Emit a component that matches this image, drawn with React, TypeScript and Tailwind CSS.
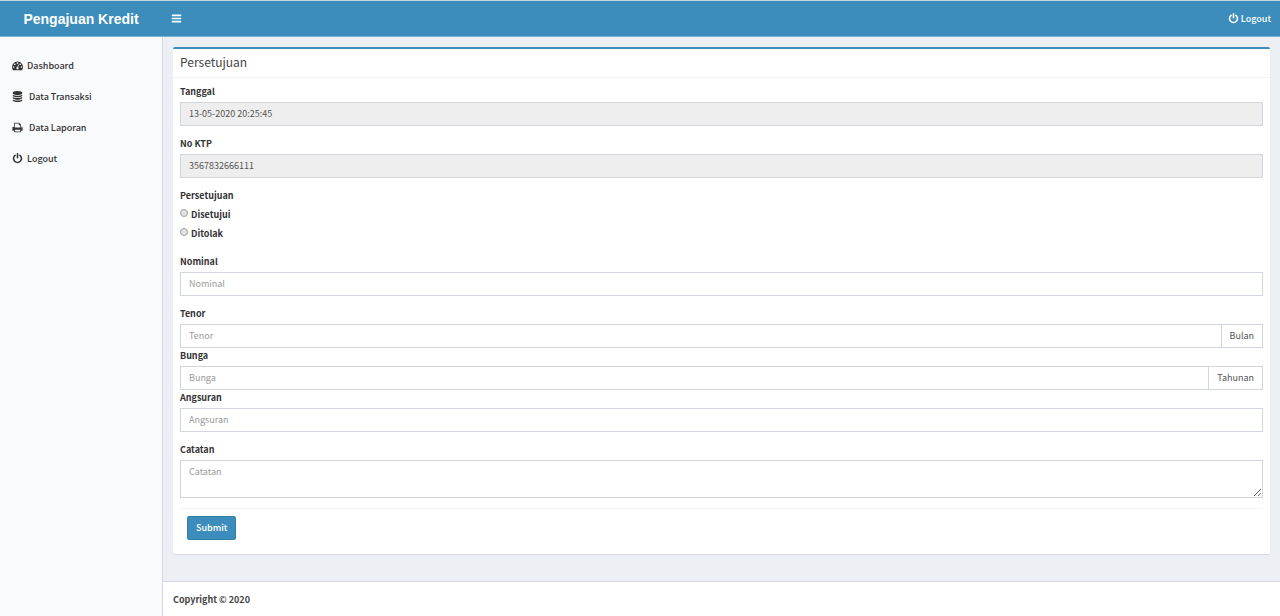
import cx from 'clsx';
import { FC, ReactNode } from 'react';

type IconProps = {
    className?: string;
    name: keyof typeof iconPaths;
};

const iconPaths = {
    bars: 'M1664 1344v128q0 26-19 45t-45 19h-1408q-26 0-45-19t-19-45v-128q0-26 19-45t45-19h1408q26 0 45 19t19 45zm0-512v128q0 26-19 45t-45 19h-1408q-26 0-45-19t-19-45v-128q0-26 19-45t45-19h1408q26 0 45 19t19 45zm0-512v128q0 26-19 45t-45 19h-1408q-26 0-45-19t-19-45v-128q0-26 19-45t45-19h1408q26 0 45 19t19 45z',
    dashboard:
        'M384 1152q0-53-37.5-90.5t-90.5-37.5-90.5 37.5-37.5 90.5 37.5 90.5 90.5 37.5 90.5-37.5 37.5-90.5zm192-448q0-53-37.5-90.5t-90.5-37.5-90.5 37.5-37.5 90.5 37.5 90.5 90.5 37.5 90.5-37.5 37.5-90.5zm428 481l101-382q6-26-7.5-48.5t-38.5-29.5-48 6.5-30 39.5l-101 382q-60 5-107 43.5t-63 98.5q-20 77 20 146t117 89 146-20 89-117q16-60-6-117t-72-91zm660-33q0-53-37.5-90.5t-90.5-37.5-90.5 37.5-37.5 90.5 37.5 90.5 90.5 37.5 90.5-37.5 37.5-90.5zm-640-640q0-53-37.5-90.5t-90.5-37.5-90.5 37.5-37.5 90.5 37.5 90.5 90.5 37.5 90.5-37.5 37.5-90.5zm448 192q0-53-37.5-90.5t-90.5-37.5-90.5 37.5-37.5 90.5 37.5 90.5 90.5 37.5 90.5-37.5 37.5-90.5zm320 448q0 261-141 483-19 29-54 29h-1402q-35 0-54-29-141-221-141-483 0-182 71-348t191-286 286-191 348-71 348 71 286 191 191 286 71 348z',
    database:
        'M896 768q237 0 443-43t325-127v170q0 69-103 128t-280 93.5-385 34.5-385-34.5-280-93.5-103-128v-170q119 84 325 127t443 43zm0 768q237 0 443-43t325-127v170q0 69-103 128t-280 93.5-385 34.5-385-34.5-280-93.5-103-128v-170q119 84 325 127t443 43zm0-384q237 0 443-43t325-127v170q0 69-103 128t-280 93.5-385 34.5-385-34.5-280-93.5-103-128v-170q119 84 325 127t443 43zm0-1152q208 0 385 34.5t280 93.5 103 128v128q0 69-103 128t-280 93.5-385 34.5-385-34.5-280-93.5-103-128v-128q0-69 103-128t280-93.5 385-34.5z',
    power: 'M1664 896q0 156-61 298t-164 245-245 164-298 61-298-61-245-164-164-245-61-298q0-182 80.5-343t226.5-270q43-32 95.5-25t83.5 50q32 42 24.5 94.5t-49.5 84.5q-98 74-151.5 181t-53.5 228q0 104 40.5 198.5t109.5 163.5 163.5 109.5 198.5 40.5 198.5-40.5 163.5-109.5 109.5-163.5 40.5-198.5q0-121-53.5-228t-151.5-181q-42-32-49.5-84.5t24.5-94.5q31-43 84-50t95 25q146 109 226.5 270t80.5 343zm-640-768v640q0 52-38 90t-90 38-90-38-38-90v-640q0-52 38-90t90-38 90 38 38 90z',
    print: 'M448 1536h896v-256h-896v256zm0-640h896v-384h-160q-40 0-68-28t-28-68v-160h-640v640zm1152 64q0-26-19-45t-45-19-45 19-19 45 19 45 45 19 45-19 19-45zm128 0v416q0 13-9.5 22.5t-22.5 9.5h-224v160q0 40-28 68t-68 28h-960q-40 0-68-28t-28-68v-160h-224q-13 0-22.5-9.5t-9.5-22.5v-416q0-79 56.5-135.5t135.5-56.5h64v-544q0-40 28-68t68-28h672q40 0 88 20t76 48l152 152q28 28 48 76t20 88v256h64q79 0 135.5 56.5t56.5 135.5z'
};

const Icon: FC<IconProps> = ({ className, name }) => (
    <svg
        aria-hidden="true"
        className={cx('size-[11px] shrink-0', className)}
        fill="currentColor"
        viewBox="0 0 1792 1792"
    >
        <path d={iconPaths[name]} />
    </svg>
);

type FieldProps = {
    /**
     * Text shown in a box attached to the right side of the input.
     */
    addon?: ReactNode;
    /**
     * The initial value of the input.
     */
    defaultValue?: string;
    /**
     * The id shared by the label and the input.
     */
    id: string;
    /**
     * The label displayed above the input, also used as placeholder.
     */
    label: string;
    /**
     * If `true`, the input is greyed out and can't be edited.
     */
    readOnly?: boolean;
};

const labelClasses = 'mb-[3px] block pt-px font-bold text-[#333]';
const controlClasses =
    'block w-full min-w-0 rounded-none border border-[#d2d6de] px-2 text-[#555] outline-none placeholder:text-[#999] focus:border-[#3c8dbc]';

const Field: FC<FieldProps> = ({ addon, defaultValue, id, label, readOnly }) => (
    <div className={cx(!addon && 'mb-2.5')}>
        <label className={labelClasses} htmlFor={id}>
            {label}
        </label>
        <div className="flex">
            <input
                className={cx(controlClasses, 'h-6 pb-px', readOnly ? 'bg-[#eee]' : 'bg-white')}
                defaultValue={defaultValue}
                id={id}
                name={id}
                placeholder={label}
                readOnly={readOnly}
                type="text"
            />
            {addon && (
                <span className="flex h-6 items-center border border-l-0 border-[#d2d6de] px-2 text-[#555]">
                    {addon}
                </span>
            )}
        </div>
    </div>
);

const Radio: FC<{ label: string; value: string }> = ({ label, value }) => (
    <label className="mb-0.5 flex h-[17px] w-fit items-center gap-[3px] font-bold text-[#333]">
        <input
            className="mb-1 size-2 appearance-none rounded-full border border-[#a0a0a0] bg-[#e2e2e2] checked:bg-[#555]"
            name="persetujuan"
            type="radio"
            value={value}
        />
        {label}
    </label>
);

const menu: { icon: IconProps['name']; label: string; wide?: boolean }[] = [
    { icon: 'dashboard', label: 'Dashboard' },
    { icon: 'database', label: 'Data Transaksi', wide: true },
    { icon: 'print', label: 'Data Laporan', wide: true },
    { icon: 'power', label: 'Logout' }
];

const Header: FC = () => (
    <header className="flex h-[37px] border-t border-b border-t-[#c5d3dc] border-b-[#7fb3d2] bg-[#3c8dbc] text-white">
        <a
            className="flex w-[162px] shrink-0 items-center justify-center font-['Liberation_Sans',sans-serif] text-[14px] font-bold"
            href="#"
        >
            Pengajuan Kredit
        </a>
        <nav className="flex flex-1 items-center justify-between px-[9px]">
            <button aria-label="Menu" type="button">
                <Icon name="bars" />
            </button>
            <a className="flex items-center gap-0.5 font-medium" href="#">
                <Icon name="power" />
                Logout
            </a>
        </nav>
    </header>
);

const Sidebar: FC = () => (
    <aside className="w-[163px] shrink-0 border-r border-[#d2d6de] bg-[#f9fafc] pt-[13px]">
        <ul>
            {menu.map(({ icon, label, wide }) => (
                <li key={label}>
                    <a
                        className={cx(
                            'flex h-[31px] items-center px-3 font-medium text-[#333]',
                            wide ? 'gap-1.5' : 'gap-1'
                        )}
                        href="#"
                    >
                        <Icon name={icon} />
                        {label}
                    </a>
                </li>
            ))}
        </ul>
    </aside>
);

const ApprovalForm: FC = () => (
    <form className="px-[7px] pt-1.5 pb-[14px]" onSubmit={(e) => e.preventDefault()}>
        <Field defaultValue="13-05-2020 20:25:45" id="tanggal" label="Tanggal" readOnly />
        <Field defaultValue="3567832666111" id="ktp" label="No KTP" readOnly />
        <fieldset className="mb-2.5">
            <legend className={labelClasses}>Persetujuan</legend>
            <Radio label="Disetujui" value="disetujui" />
            <Radio label="Ditolak" value="ditolak" />
        </fieldset>
        <Field id="nominal" label="Nominal" />
        <Field addon="Bulan" id="tenor" label="Tenor" />
        <Field addon="Tahunan" id="bunga" label="Bunga" />
        <Field id="angsuran" label="Angsuran" />
        <div className="mb-2.5">
            <label className={labelClasses} htmlFor="catatan">
                Catatan
            </label>
            <textarea
                className={cx(controlClasses, 'h-[38px] resize bg-white py-1')}
                id="catatan"
                name="catatan"
                placeholder="Catatan"
            />
        </div>
        <div className="border-t border-[#f4f4f4] px-[7px] pt-[7px]">
            <button
                className="block h-6 rounded-xs border border-[#367fa9] bg-[#3c8dbc] px-2 font-medium text-white"
                type="submit"
            >
                Submit
            </button>
        </div>
    </form>
);

export default function App() {
    return (
        <div className="flex min-h-screen flex-col bg-[#ecf0f5] font-['Noto_Sans_CJK_SC',sans-serif] text-[9px] leading-[14px]">
            <Header />
            <div className="flex flex-1">
                <Sidebar />
                <div className="flex min-w-0 flex-1 flex-col">
                    <main className="flex-1 px-2.5 pt-2.5 pb-[27px]">
                        <section className="rounded-xs border-t-2 border-[#3c8dbc] bg-white shadow-[0_1px_1px_rgba(0,0,0,0.1)]">
                            <h1 className="border-b border-[#f4f4f4] px-[7px] pt-1.5 pb-2 text-[12px] text-[#444]">
                                Persetujuan
                            </h1>
                            <ApprovalForm />
                        </section>
                    </main>
                    <footer className="border-t border-[#d2d6de] bg-white px-2.5 pt-[11px] pb-[9px] font-bold text-[#444]">
                        Copyright © 2020
                    </footer>
                </div>
            </div>
        </div>
    );
}
